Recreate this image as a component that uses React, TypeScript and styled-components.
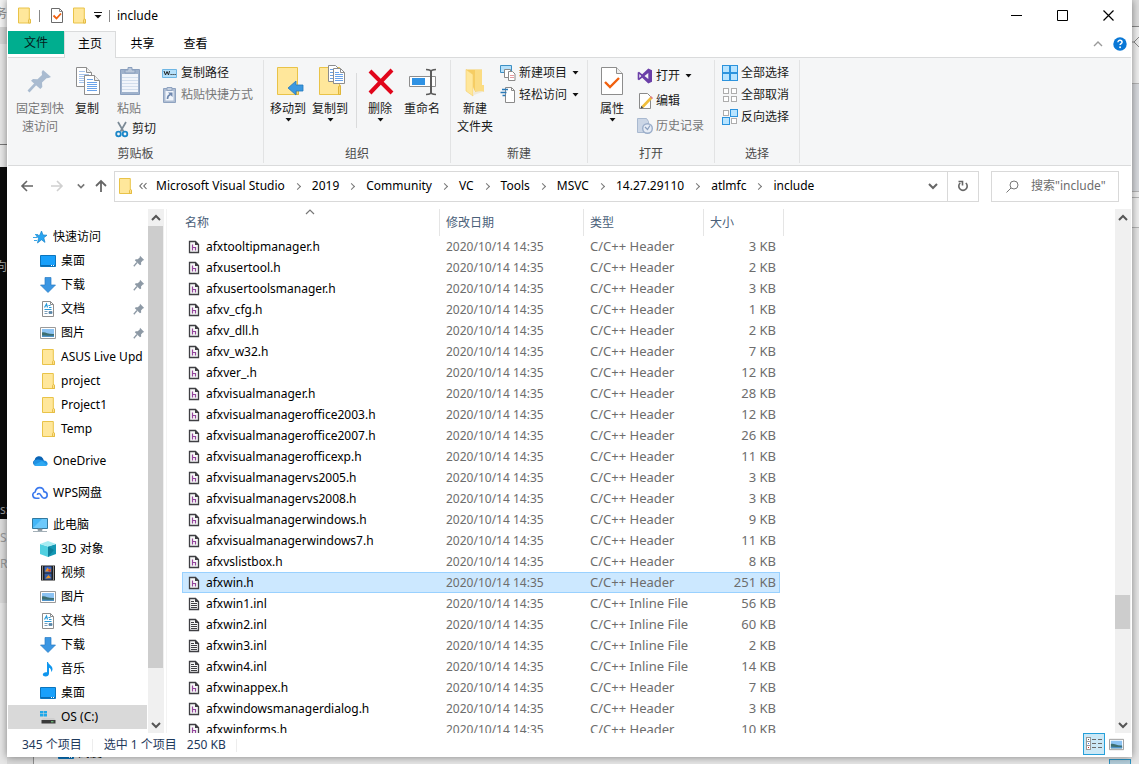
import React, { ReactNode } from "react";
import styled, { createGlobalStyle, css } from "styled-components";

const GlobalStyle = createGlobalStyle`
  *, *::before, *::after { box-sizing: border-box; }
  html, body { margin: 0; padding: 0; }
  body {
    font-family: "Noto Sans", "Noto Sans CJK SC", sans-serif;
    font-size: 12px;
    line-height: 18px;
    color: #000;
    background: #e4e4e4;
  }
  button, input {
    font: inherit;
    color: inherit;
    background: none;
    border: 0;
    padding: 0;
    margin: 0;
  }
  svg { display: block; flex: none; }
`;

/* ---------- desktop behind the window ---------- */

const Desktop = styled.div`
  position: relative;
  display: grid;
  grid-template-columns: 7px minmax(0, 1fr) 7px;
  grid-template-rows: minmax(0, 1fr) 7px;
  height: 100vh;
  overflow: hidden;
`;

const Strip = styled.div`
  grid-row: 1 / 3;
  display: flex;
  flex-direction: column;
  overflow: hidden;
`;

const Band = styled.div<{ $h?: number; $bg: string; $line?: string; $fg?: string }>`
  display: flex;
  justify-content: flex-end;
  align-items: center;
  overflow: hidden;
  white-space: nowrap;
  ${(p) => (p.$h ? `flex: 0 0 ${p.$h}px;` : "flex: 1;")}
  background: ${(p) => p.$bg};
  border-bottom: ${(p) => (p.$line ? `1px solid ${p.$line}` : "0")};
  color: ${(p) => p.$fg || "#8a8a8a"};
`;

const LeftAligned = styled(Band)`
  justify-content: flex-start;
`;

const BottomBand = styled.div`
  grid-column: 2;
  grid-row: 2;
  position: relative;
  background: #e6e6e6;
`;

const BehindItem = styled.div`
  position: absolute;
  left: 51px;
  bottom: 2px;
  display: flex;
  align-items: center;
  gap: 4px;
`;

const BehindPane = styled.div`
  position: absolute;
  left: 0;
  bottom: 0;
  width: 27px;
  height: 7px;
  background: #d9d9d9;
  border-right: 1px solid #8d8d8d;
`;

const BehindButton = styled.div`
  position: absolute;
  right: 1px;
  bottom: 0;
  width: 22px;
  height: 5px;
  background: #b3cdda;
  border: 1px solid #2d94c4;
  border-bottom: 0;
`;

/* ---------- window ---------- */

const Window = styled.div`
  grid-column: 2;
  grid-row: 1;
  position: relative;
  z-index: 1;
  display: flex;
  flex-direction: column;
  min-height: 0;
  background: #fff;
  padding: 0 1px;
  box-shadow: 0 0 8px rgba(0, 0, 0, 0.45);
`;

const TitleBar = styled.header`
  display: flex;
  align-items: center;
  height: 31px;
  padding-left: 8px;
`;

const QuickBar = styled.div`
  display: flex;
  align-items: center;
  flex: 1;
`;

const QuickButton = styled.button<{ $ml?: number }>`
  margin-left: ${(p) => p.$ml || 0}px;
`;

const Bar = styled.span`
  width: 1px;
  height: 12px;
  background: #888;
  margin: 0 7px;
`;

const WindowButton = styled.button`
  display: flex;
  align-items: center;
  justify-content: center;
  width: 46px;
  height: 31px;
`;

const Tabs = styled.nav`
  display: flex;
  height: 27px;
  border-bottom: 1px solid #dadbdc;
`;

const Tab = styled.button<{ $kind?: "file" | "active" }>`
  width: 53px;
  height: 26px;
  ${(p) =>
    p.$kind === "file" &&
    css`
      width: 56px;
      height: 23px;
      background: #00ae8f;
      color: #04201b;
    `}
  ${(p) =>
    p.$kind === "active" &&
    css`
      height: 27px;
      width: 52px;
      background: #f5f6f7;
      border: 1px solid #dadbdc;
      border-bottom: 0;
      padding-bottom: 2px;
    `}
`;

const TabTools = styled.div`
  display: flex;
  align-items: center;
  gap: 10px;
  margin-left: auto;
  padding-right: 4px;
`;

const Ribbon = styled.div`
  display: flex;
  height: 108px;
  padding: 2px 0;
  background: #f5f6f7;
  border-bottom: 1px solid #dadbdc;
`;

const Group = styled.section`
  display: flex;
  flex-direction: column;
  border-right: 1px solid #e2e3e4;
`;

const GroupBody = styled.div<{ $pl: number; $pr: number }>`
  display: flex;
  flex: 1;
  padding: 0 ${(p) => p.$pr}px 0 ${(p) => p.$pl}px;
`;

const GroupLabel = styled.h2`
  margin: 0;
  font-size: 12px;
  font-weight: 400;
  line-height: 18px;
  text-align: center;
  color: #4a4a4a;
`;

const Stack = styled.div`
  display: flex;
  flex-direction: column;
  align-items: flex-end;
`;

const BigButton = styled.button<{ $w: number }>`
  display: flex;
  flex-direction: column;
  align-items: center;
  align-self: flex-start;
  width: ${(p) => p.$w}px;
  padding-top: 5px;
  text-align: center;
  color: #1a1a1a;
  &:disabled { color: #777; }
  svg:first-child { margin-bottom: 3px; }
`;

const SmallColumn = styled.div<{ $gap?: number; $pl?: number; $pt?: number }>`
  display: flex;
  flex-direction: column;
  gap: ${(p) => p.$gap || 0}px;
  padding-left: ${(p) => p.$pl || 0}px;
  padding-top: ${(p) => p.$pt ?? 2}px;
`;

const SmallButton = styled.button`
  display: flex;
  align-items: center;
  gap: 3px;
  height: 22px;
  white-space: nowrap;
  color: #1a1a1a;
  &:disabled { color: #777; }
  svg:last-child:not(:first-child) { margin-left: 2px; }
`;

const Divider = styled.span`
  width: 1px;
  height: 55px;
  margin: 13px 5px 0;
  background: #dadbdc;
`;

/* ---------- address row ---------- */

const AddressRow = styled.div`
  display: flex;
  align-items: center;
  height: 43px;
  padding: 0 12px 3px 7px;
`;

const NavButtons = styled.div`
  display: flex;
  align-items: center;
`;

const NavButton = styled.button<{ $w: number }>`
  display: flex;
  align-items: center;
  justify-content: center;
  width: ${(p) => p.$w}px;
  height: 30px;
`;

const AddressBox = styled.div`
  display: flex;
  align-items: center;
  flex: 1;
  min-width: 0;
  height: 31px;
  border: 1px solid #d9d9d9;
  padding-left: 2px;
`;

const Crumbs = styled.ol`
  display: flex;
  flex: 1;
  align-items: center;
  min-width: 0;
  overflow: hidden;
  margin: 0;
  padding: 0 0 0 6px;
  list-style: none;
  white-space: nowrap;
  li { display: flex; align-items: center; }
  li > svg { margin-right: 9px; }
  li + li::before {
    content: "";
    width: 5px;
    height: 5px;
    margin: 1px 12px 0 10px;
    border: solid #777;
    border-width: 1px 1px 0 0;
    transform: rotate(45deg);
  }
  a { color: #000; text-decoration: none; }
`;

const RefreshButton = styled.button`
  display: flex;
  align-items: center;
  justify-content: center;
  width: 31px;
  height: 29px;
  border-left: 1px solid #d9d9d9;
`;

const SearchBox = styled.label`
  display: flex;
  align-items: center;
  gap: 12px;
  width: 128px;
  height: 31px;
  margin-left: 12px;
  padding-left: 14px;
  border: 1px solid #d9d9d9;
`;

const SearchInput = styled.input`
  flex: 1;
  min-width: 0;
  outline: 0;
  &::placeholder { color: #6d6d6d; opacity: 1; }
`;

/* ---------- body ---------- */

const Body = styled.div`
  display: flex;
  flex: 1;
  min-height: 0;
`;

const Sidebar = styled.aside`
  display: flex;
  width: 159px;
  border-right: 1px solid #f3f3f3;
  overflow: hidden;
`;

const Tree = styled.nav`
  width: 139px;
  margin-right: 1px;
  padding-top: 16px;
  overflow: hidden;
`;

const TreeItem = styled.a<{ $level: number; $gap?: boolean; $active?: boolean }>`
  display: flex;
  align-items: center;
  gap: 5px;
  height: 24px;
  margin-top: ${(p) => (p.$gap ? 8 : 0)}px;
  padding-left: ${(p) => (p.$level ? 32 : 24)}px;
  padding-right: ${(p) => (p.$level ? 2 : 0)}px;
  background: ${(p) => (p.$active ? "#d9d9d9" : "transparent")};
  color: #000;
  text-decoration: none;
  white-space: nowrap;
`;

const TreeText = styled.span`
  flex: 1 0 auto;
`;

const Track = styled.div`
  display: flex;
  flex-direction: column;
  align-items: flex-start;
  width: 16px;
  background: #f0f0f0;
`;

const TrackButton = styled.button`
  display: flex;
  align-items: center;
  justify-content: center;
  width: 16px;
  height: 17px;
`;

const Space = styled.div<{ $grow: number }>`
  flex: ${(p) => p.$grow} 1 0;
`;

const Thumb = styled.div<{ $grow?: number }>`
  width: 15px;
  ${(p) => (p.$grow ? `flex: ${p.$grow} 1 0;` : "flex: 0 0 34px;")}
  background: #cdcdcd;
`;

const Files = styled.main`
  flex: 1;
  min-width: 0;
  padding-left: 15px;
  overflow: hidden;
`;

const Table = styled.table`
  width: 602px;
  table-layout: fixed;
  border-collapse: separate;
  border-spacing: 0;
`;

const HeadCell = styled.th<{ $pad?: number }>`
  position: relative;
  height: 27px;
  padding: 0 0 0 ${(p) => p.$pad ?? 6}px;
  border-right: 1px solid #e5e5e5;
  font-weight: 400;
  text-align: left;
  color: #4a6079;
`;

const SortMark = styled.span`
  position: absolute;
  top: -2px;
  left: 50%;
  margin-left: -6px;
`;

const Cell = styled.td<{ $wide?: boolean; $right?: boolean; $main?: boolean }>`
  height: 21px;
  padding: 0 ${(p) => (p.$right ? 4 : 0)}px ${(p) => (p.$wide ? 2 : 0)}px 6px;
  font-size: ${(p) => (p.$wide ? 13 : 12)}px;
  line-height: 18px;
  text-align: ${(p) => (p.$right ? "right" : "left")};
  color: ${(p) => (p.$main ? "#000" : "#6d6d6d")};
  white-space: nowrap;
`;

const FileRow = styled.tr<{ $selected?: boolean }>`
  ${(p) =>
    p.$selected &&
    css`
      td:not(:last-child) {
        background: #cce8ff;
        box-shadow: inset 0 1px #99d1ff, inset 0 -1px #99d1ff;
      }
      td:first-child { box-shadow: inset 0 1px #99d1ff, inset 0 -1px #99d1ff, inset 1px 0 #99d1ff; }
      td:nth-child(4) { box-shadow: inset 0 1px #99d1ff, inset 0 -1px #99d1ff, inset -1px 0 #99d1ff; }
    `}
`;

const NameWrap = styled.span`
  display: flex;
  align-items: center;
  gap: 6px;
`;

const StatusBar = styled.footer`
  display: flex;
  align-items: center;
  height: 24px;
  padding: 0 7px 0 14px;
  color: #1e395b;
`;

const StatusRule = styled.span`
  width: 1px;
  height: 13px;
  margin: 0 11px 0 10px;
  background: #ededed;
`;

const StatusSize = styled.span`
  margin-left: 10px;
`;

const ViewButtons = styled.div`
  display: flex;
  align-items: center;
  align-self: flex-start;
  gap: 4px;
  margin-left: auto;
`;

const ViewButton = styled.button<{ $on?: boolean }>`
  display: flex;
  align-items: center;
  justify-content: center;
  height: 22px;
  width: ${(p) => (p.$on ? 22 : 15)}px;
  border: ${(p) => (p.$on ? "1px solid #26a0da" : "0")};
  background: ${(p) => (p.$on ? "#cbe8f6" : "transparent")};
`;

/* ---------- icons ---------- */

const Folder = ({ w = 16, h = 18 }: { w?: number; h?: number }) => (
  <svg width={w} height={h} viewBox="0 0 16 18">
    <path d="M2.5 1.5h10.8v11l1.2.6v3.4h-12z" fill="#ffe79b" stroke="#e9c348" />
    <path d="M12.5 16.5v-3l1-1.2 1 1.2v3z" fill="#ffe08a" stroke="#dfb63a" strokeWidth=".8" />
  </svg>
);

const CheckDoc = () => (
  <svg width="14" height="17" viewBox="0 0 14 17">
    <path d="M1.500 1.500h8l3 3v11h-11z" fill="#fff" stroke="#6b6b6b" />
    <path d="M9.500 1.500v3h3" fill="none" stroke="#8a8a8a" />
    <path d="M3.500 8.500l3 3L11 6.500" fill="none" stroke="#f1600e" strokeWidth="1.800" />
  </svg>
);

const Arrow = () => (
  <svg width="7" height="4" viewBox="0 0 7 4">
    <path d="M.5 0h6L3.5 3.5z" fill="#111" />
  </svg>
);

const PinBig = () => (
  <svg width="32" height="32" viewBox="0 0 32 32">
    <path
      d="M19 5l8 7-2.500 1-2 .2-4.500 4.300.3 4.500-2 2L7 15.800l2-1.800 4.500.3L18 10l-.3-3z"
      fill="#a9bbd0"
    />
    <path d="M11.500 19L4.500 26.500" stroke="#a9bbd0" strokeWidth="2.600" />
  </svg>
);

const Sheet = ({ x, y, lines = "#4b8fdd" }: { x: number; y: number; lines?: string }) => (
  <g transform={`translate(${x} ${y})`}>
    <path d="M.5.5h10l5 5v14H.5z" fill="#fff" stroke="#8d8d8d" />
    <path d="M10.500.5v5h5" fill="#eee" stroke="#8d8d8d" />
    <path d="M3 4.500h6M3 7.500h10M3 9.500h10M3 11.500h10M3 13.500h10M3 15.500h10" stroke={lines} />
  </g>
);

const CopyIcon = () => (
  <svg width="32" height="32" viewBox="0 0 32 32">
    <Sheet x={5} y={2} lines="#a5c3ec" />
    <Sheet x={13} y={10} lines="#6aa3ea" />
  </svg>
);

const PasteIcon = () => (
  <svg width="32" height="32" viewBox="0 0 32 32">
    <path d="M7.500 4.500h19v25h-19z" fill="#9fb2cc" stroke="#8a9fbe" />
    <path d="M9 9h16v18H9z" fill="#f1f5fb" />
    <path d="M9 12.500h16M9 15.500h16M9 18.500h16M9 21.500h16M9 24.500h16" stroke="#d2deed" />
    <path d="M12 8V5h3V2.500h4V5h3v3z" fill="#b9c7da" stroke="#8a9fbe" />
  </svg>
);

const CutIcon = () => (
  <svg width="14" height="17" viewBox="0 0 14 17">
    <path d="M3 1l5.500 9.500M11 1L5.500 10.500" stroke="#7b8a96" strokeWidth="1.700" />
    <circle cx="3.500" cy="13" r="2.300" fill="none" stroke="#1a86c8" strokeWidth="1.800" />
    <circle cx="10" cy="13" r="2.300" fill="none" stroke="#1a86c8" strokeWidth="1.800" />
  </svg>
);

const PathIcon = () => (
  <svg width="16" height="16" viewBox="0 0 16 16">
    <path d="M.5 4.500h14v8H.5z" fill="#b5e0fa" stroke="#6fb6e4" />
    <path d="M2 6l1.500 4L5 6.500 6.500 10l1-4" fill="none" stroke="#222" />
    <path d="M8.500 9.500h1.200M10.500 9.500h1.200M12.500 9.500h1.200" stroke="#222" />
  </svg>
);

const ShortcutIcon = () => (
  <svg width="16" height="16" viewBox="0 0 16 16">
    <path d="M1.500 1.500h12v14h-12z" fill="#aebdd3" stroke="#8fa3c0" />
    <path d="M3.500 4h8v9.500h-8z" fill="#f1f5fb" />
    <path d="M5 .5h5v3H5z" fill="#c5d0e0" stroke="#8fa3c0" />
    <path d="M5.500 12c0-3 1-4 3-4.500" stroke="#6d86ad" strokeWidth="1.600" fill="none" />
    <path d="M6 5.500h4.500V10z" fill="#6d86ad" />
  </svg>
);

const MoveIcon = () => (
  <svg width="32" height="32" viewBox="0 0 32 32">
    <path d="M5.500 2.500h20v24h1v3h-21z" fill="#ffe79b" stroke="#e9c348" />
    <path d="M24.500 29.500v-5l2-1v6z" fill="#fbd873" stroke="#dfb63a" />
    <path d="M16 23l8-7v4h7v6h-7v4z" fill="#3b98e0" stroke="#2478bd" strokeWidth=".8" />
  </svg>
);

const CopyToIcon = () => (
  <svg width="32" height="32" viewBox="0 0 32 32">
    <path d="M5.500 2.500h20v24h1v3h-21z" fill="#ffe79b" stroke="#e9c348" />
    <path d="M24.500 29.500v-8l2-1v9z" fill="#fbd873" stroke="#dfb63a" />
    <path d="M14.500.500h7l4 4v12h-11z" fill="#fff" stroke="#8d8d8d" />
    <path d="M16 4.500h4M16 7.500h3M16 10.500h3M16 13.500h3" stroke="#6aa0e2" />
    <path d="M19.500 3.500h7l4 4v11h-11z" fill="#fff" stroke="#8d8d8d" />
    <path d="M26.500 3.500v4h4" fill="none" stroke="#8d8d8d" />
    <path d="M21 7.500h4M21 9.500h8M21 11.500h8M21 13.500h8M21 15.500h8" stroke="#6aa3ea" />
  </svg>
);

const DeleteIcon = () => (
  <svg width="32" height="32" viewBox="0 0 32 32">
    <path d="M6 6l22 22M28 5L6 28" stroke="#e1061b" strokeWidth="4" />
  </svg>
);

const RenameIcon = () => (
  <svg width="32" height="32" viewBox="0 0 32 32">
    <path d="M3.500 11.500h26v10h-26z" fill="#fff" stroke="#8d8d8d" />
    <path d="M6 13h13v7H6z" fill="#2f92e4" />
    <path d="M25 5v24" stroke="#5c5c5c" strokeWidth="2" />
    <path d="M20 4.500c3 0 5 .5 5 2.500 0-2 2-2.500 5-2.500M20 29.500c3 0 5-.5 5-2.500 0 2 2 2.500 5 2.500" fill="none" stroke="#5c5c5c" strokeWidth="1.600" />
  </svg>
);

const NewFolderIcon = () => (
  <svg width="32" height="32" viewBox="0 0 32 32">
    <path d="M7 4.500h16v21.500l-7 1z" fill="#f6cd63" />
    <path d="M16 5h7v15h2v7l-9-1z" fill="#fbdc83" />
    <path d="M7 4.500l7 5V31l-7-5z" fill="#ffe79b" stroke="#f3cf6b" strokeWidth=".6" />
    <path d="M14 27l12-1-11 4z" fill="#efe9da" />
  </svg>
);

const NewItemIcon = () => (
  <svg width="16" height="16" viewBox="0 0 16 16">
    <path d="M.5.500h11v7H.5z" fill="#b5e0fa" stroke="#3c8fc4" />
    <path d="M4.500 4.500h6v8h-6z" fill="#fff" stroke="#8a8a8a" />
    <path d="M8.500 6.500h4l2.500 2.500v6.500H8.500z" fill="#fff" stroke="#8a8a8a" />
    <path d="M10 10.500h4M10 12.500h4" stroke="#e59aa0" />
  </svg>
);

const EasyIcon = () => (
  <svg width="16" height="16" viewBox="0 0 16 16">
    <path d="M5.500.500h6l3 3v12h-9z" fill="#fff" stroke="#8a8a8a" />
    <path d="M11.500.500v3h3" fill="none" stroke="#8a8a8a" />
    <path d="M2 2.500h6M.5 5.500h6M2.500 8.500h3" stroke="#2a7ab8" strokeWidth="1.400" />
  </svg>
);

const VsIcon = () => (
  <svg width="16" height="16" viewBox="0 0 16 16">
    <path d="M11.300.5l3.700 1.700v11.600l-3.700 1.700L5.200 9.700 2 12.300.7 11.500v-7L2 3.700l3.200 2.600zM11.300 5L7.500 8l3.800 3zM2.300 6v4l2-2z" fill="#6b3fa8" fillRule="evenodd" />
  </svg>
);

const EditIcon = () => (
  <svg width="16" height="16" viewBox="0 0 16 16">
    <path d="M2.500.500h8l3 3v12h-11z" fill="#fff" stroke="#8a8a8a" />
    <path d="M14.500 4.500l-9 9.500" stroke="#f0bd3a" strokeWidth="2.600" />
    <path d="M3.500 15.500l.8-2.800 2 2z" fill="#444" />
    <path d="M13.500 3.500l2 2" stroke="#e0798a" strokeWidth="1.500" />
  </svg>
);

const HistoryIcon = () => (
  <svg width="16" height="16" viewBox="0 0 16 16">
    <path d="M.5 .5h9l2 3v11H.5z" fill="#cbd6e6" stroke="#a9b9d0" />
    <circle cx="10.500" cy="10.500" r="4.800" fill="#e6ecf5" stroke="#9aadc9" strokeWidth="1.400" />
    <path d="M8 9l2.500 2.500L13 7.500" fill="none" stroke="#8a9fbe" strokeWidth="1.200" />
  </svg>
);

const Squares = ({ on }: { on: boolean[] }) => (
  <svg width="16" height="16" viewBox="0 0 16 16">
    {on.map((blue, i) => {
      const x = (i % 2) * 8;
      const y = Math.floor(i / 2) * 8;
      return blue ? (
        <rect key={i} x={x + 0.5} y={y + 0.5} width="7" height="7" fill="#b8e4ff" stroke="#2c93dd" />
      ) : (
        <rect key={i} x={x + 1.5} y={y + 1.5} width="5" height="5" fill="#fff" stroke="#adadad" />
      );
    })}
  </svg>
);

const Chevron = ({ dir, w = 10, color = "#555", sw = 2 }: { dir: "up" | "down"; w?: number; color?: string; sw?: number }) => (
  <svg width={w} height={w} viewBox="0 0 10 10">
    <path d={dir === "up" ? "M1 7l4-4 4 4" : "M1 3l4 4 4-4"} fill="none" stroke={color} strokeWidth={sw} />
  </svg>
);

const BackArrow = ({ color }: { color: string }) => (
  <svg width="14" height="12" viewBox="0 0 14 12">
    <path d="M7 1L2 6l5 5M2 6h11" fill="none" stroke={color} strokeWidth="1.600" />
  </svg>
);

const ForwardArrow = ({ color }: { color: string }) => (
  <svg width="14" height="12" viewBox="0 0 14 12">
    <path d="M7 1l5 5-5 5M12 6H1" fill="none" stroke={color} strokeWidth="1.600" />
  </svg>
);

const UpArrow = () => (
  <svg width="12" height="14" viewBox="0 0 12 14">
    <path d="M1 7l5-5 5 5M6 2v11" fill="none" stroke="#666" strokeWidth="1.800" />
  </svg>
);

const RefreshIcon = () => (
  <svg width="12" height="12" viewBox="0 0 12 12">
    <path d="M3.200 3a4.200 4.200 0 1 0 5.600 0" fill="none" stroke="#666" strokeWidth="1.600" />
    <path d="M1.500 1.500h4v4" fill="none" stroke="#666" strokeWidth="1.600" />
  </svg>
);

const SearchIcon = () => (
  <svg width="13" height="13" viewBox="0 0 13 13">
    <circle cx="8" cy="5" r="4" fill="none" stroke="#777" />
    <path d="M5 8L.5 12.500" stroke="#777" />
  </svg>
);

const HelpIcon = () => (
  <svg width="14" height="14" viewBox="0 0 15 15">
    <circle cx="7.500" cy="7.500" r="7.200" fill="#0a78d6" />
    <path d="M5.300 5.600c0-2.800 4.400-2.600 4.400-.1 0 1.600-2.100 1.600-2.100 3.200" fill="none" stroke="#fff" strokeWidth="1.600" />
    <circle cx="7.600" cy="11" r="1" fill="#fff" />
  </svg>
);

const StarIcon = () => (
  <svg width="16" height="16" viewBox="0 0 16 16">
    <path d="M9.500 2l1.500 4 4 .2-3.200 2.600 1.200 4.600-3.500-2.600L5.500 14l1-4.700L4 6.500l3.800-.3z" fill="#29a5f2" stroke="#1583c9" strokeWidth=".7" />
    <path d="M3 5.500h3M1 8.500h4M2 11.500h3" stroke="#3aa6e8" />
  </svg>
);

const DesktopIcon = () => (
  <svg width="16" height="16" viewBox="0 0 16 16">
    <path d="M.5 2.500h15v11H.5z" fill="#18a0fb" stroke="#0b75bd" />
    <path d="M1 12.500h14" stroke="#0a6cb4" />
    <path d="M11 12.500h1M13 12.500h1" stroke="#fff" />
  </svg>
);

const DownloadIcon = () => (
  <svg width="16" height="16" viewBox="0 0 16 16">
    <path d="M5 .5h6V8h4.500L8 15.500.5 8H5z" fill="#3b96e2" stroke="#2a7cc4" strokeWidth=".7" />
  </svg>
);

const DocIcon = () => (
  <svg width="16" height="16" viewBox="0 0 16 16">
    <path d="M2.500.500h8l3 3v12h-11z" fill="#fff" stroke="#8d8d8d" />
    <path d="M10.500.500v3h3" fill="none" stroke="#8d8d8d" />
    <path d="M4.500 6.500L6.500 3l1 3.500M8.500 4.500h2M9 6.500h2.500M4.500 8.500h7" fill="none" stroke="#2a9ad8" strokeWidth="1.200" />
    <path d="M4.500 10.500h3M4.500 12.500h3M9 10.500h3v2H9z" stroke="#5a86a8" fill="#5a86a8" strokeWidth=".8" />
  </svg>
);

const PictureIcon = ({ w = 16, h = 16 }: { w?: number; h?: number }) => (
  <svg width={w} height={h} viewBox="0 0 16 16">
    <path d="M.5 2.500h15v11H.5z" fill="#fff" stroke="#9a9a9a" />
    <path d="M2 4h12v8H2z" fill="#8cc3f3" />
    <path d="M2 7.500c3-1 6 2 12 1.500v3H2z" fill="#3d6f72" />
    <path d="M2 10.500c4-.5 8 .8 12 0V12H2z" fill="#4f93c9" />
  </svg>
);

const CloudIcon = () => (
  <svg width="16" height="16" viewBox="0 0 16 16">
    <path d="M3 12.500a3 3 0 0 1-.3-5.500A4.500 4.500 0 0 1 11 5.500L12 8z" fill="#0a64b5" />
    <path d="M4 13a3.200 3.200 0 0 1 .5-6.300c4-.5 5 1 7 .8 5 .2 5.500 5.500 1.500 5.500z" fill="#1f92e4" />
    <path d="M2 12l8-4 5 4-1.500 1H4z" fill="#2fa9f2" />
  </svg>
);

const WpsIcon = () => (
  <svg width="16" height="16" viewBox="0 0 16 16">
    <path d="M7.500 13.200H4a3.200 3.200 0 0 1-.8-6.300C3.800 4 5.600 2.600 7.700 2.600c2.300 0 4 1.700 4.200 4 1.900.3 3.300 1.700 3.300 3.400 0 1.800-1.300 3.200-3.200 3.200-3.200 0-2.500-4.700-5-4.700-1 0-1.600.6-1.600 1.600" fill="none" stroke="#3b79ee" strokeWidth="1.600" />
  </svg>
);

const PcIcon = () => (
  <svg width="16" height="16" viewBox="0 0 16 16">
    <path d="M.5 1.500h15v10H.5z" fill="#43b6f7" stroke="#32799f" />
    <path d="M1 11l9-9h5v9z" fill="#6cc9fb" />
    <path d="M6 12h4v1.500H6zM1 14.500h14" fill="#888" stroke="#8c9ba5" strokeWidth=".8" />
  </svg>
);

const CubeIcon = () => (
  <svg width="16" height="16" viewBox="0 0 16 16">
    <path d="M0 3l8 2.500V16l-8-3z" fill="#4fd0e0" />
    <path d="M16 3L8 5.500V16l8-3z" fill="#1497b3" />
    <path d="M0 3l8-3 8 3-8 2.500z" fill="#a6ecf2" />
    <path d="M8 5.500L14 9l-6 7z" fill="#0c7f9b" />
  </svg>
);

const VideoIcon = () => (
  <svg width="16" height="16" viewBox="0 0 16 16">
    <path d="M1 .500h14v15H1z" fill="#1f1f1f" />
    <path d="M4.500 1.500h7v6h-7z" fill="#3b68c5" />
    <path d="M4.500 8.500h7v6h-7z" fill="#355da6" />
    <path d="M5 6.500l2.500-4 1.500 2 1.500-1 .5 3zM5.500 13.500l3-3.500 2.500 3z" fill="#e8962c" />
    <circle cx="9.500" cy="5.500" r="1.200" fill="#c8382c" />
    <path d="M2.500 1.500v13M13.500 1.500v13" stroke="#fff" strokeDasharray="1 1" />
  </svg>
);

const MusicIcon = () => (
  <svg width="16" height="16" viewBox="0 0 16 16">
    <path d="M8 1c.5 3 4.500 3.500 4.500 7 0 1.500-.7 2.300-1.300 3 .3-2.600-.8-3.600-2.200-4.300v5.800c0 2-1.500 3-3.300 3-1.700 0-2.900-.8-2.900-2 0-1.600 2.200-2.800 4.200-2.200V1z" fill="#0f96ee" />
  </svg>
);

const DriveIcon = () => (
  <svg width="16" height="16" viewBox="0 0 16 16">
    <path d="M0 2h3v2.500H0zM3.500 2H7v2.500H3.500zM0 5h3v2.500H0zM3.500 5H7v2.500H3.500z" fill="#1fa7e8" />
    <path d="M3 9h11l1.500 2H1.500z" fill="#cfcfcf" />
    <path d="M1.500 11h14v3.500h-14z" fill="#3a3a3a" />
    <path d="M11 12.800h2.500" stroke="#7fe08a" />
  </svg>
);

const PinSmall = () => (
  <svg width="12" height="12" viewBox="0 0 12 12">
    <path d="M7 .8L11.200 5l-1.400.5-1.800 2 .2 2L7 10.300 1.800 5.200l.9-1 2 .1 2-1.900z" fill="#8d99a5" />
    <path d="M4 7.500L.8 11.200" stroke="#8d99a5" strokeWidth="1.300" />
  </svg>
);

const HeaderFile = () => (
  <svg width="12" height="14" viewBox="0 0 12 14">
    <path d="M1.500 1.500h6l3 3v8h-9z" fill="#f7f7f7" stroke="#3f3f43" strokeWidth="1.300" />
    <path d="M7 1l4 4H7z" fill="#3f3f43" />
    <path d="M4.500 4.500v6M4.500 7.500h3v3" fill="none" stroke="#93459c" strokeWidth="1.200" />
  </svg>
);

const TextFile = () => (
  <svg width="12" height="14" viewBox="0 0 12 14">
    <path d="M1.500 1.500h6l3 3v8h-9z" fill="#f7f7f7" stroke="#3f3f43" strokeWidth="1.300" />
    <path d="M7 1l4 4H7z" fill="#3f3f43" />
    <path d="M3 4.500h3M3 6.500h6M3 8.500h6M3 10.500h6" stroke="#3f3f43" />
  </svg>
);

const DetailsIcon = () => (
  <svg width="16" height="14" viewBox="0 0 16 14">
    {[0, 1, 2].map((i) => (
      <g key={i} transform={`translate(0 ${i * 4})`}>
        <rect x=".5" y=".5" width="4" height="4" fill="#fff" stroke="#999" />
        <path d="M2 2.500h1" stroke={["#555", "#3b79ee", "#d22"][i]} />
        <path d="M6 2.500h4M12 2.500h4" stroke="#6b6b6b" />
      </g>
    ))}
  </svg>
);

/* ---------- data ---------- */

type Item = { text: string; icon: ReactNode; level: number; gap?: boolean; pin?: boolean; active?: boolean };

const tree: Item[] = [
  { text: "快速访问", icon: <StarIcon />, level: 0 },
  { text: "桌面", icon: <DesktopIcon />, level: 1, pin: true },
  { text: "下载", icon: <DownloadIcon />, level: 1, pin: true },
  { text: "文档", icon: <DocIcon />, level: 1, pin: true },
  { text: "图片", icon: <PictureIcon />, level: 1, pin: true },
  { text: "ASUS Live Upd", icon: <Folder />, level: 1 },
  { text: "project", icon: <Folder />, level: 1 },
  { text: "Project1", icon: <Folder />, level: 1 },
  { text: "Temp", icon: <Folder />, level: 1 },
  { text: "OneDrive", icon: <CloudIcon />, level: 0, gap: true },
  { text: "WPS网盘", icon: <WpsIcon />, level: 0, gap: true },
  { text: "此电脑", icon: <PcIcon />, level: 0, gap: true },
  { text: "3D 对象", icon: <CubeIcon />, level: 1 },
  { text: "视频", icon: <VideoIcon />, level: 1 },
  { text: "图片", icon: <PictureIcon />, level: 1 },
  { text: "文档", icon: <DocIcon />, level: 1 },
  { text: "下载", icon: <DownloadIcon />, level: 1 },
  { text: "音乐", icon: <MusicIcon />, level: 1 },
  { text: "桌面", icon: <DesktopIcon />, level: 1 },
  { text: "OS (C:)", icon: <DriveIcon />, level: 1, active: true },
];

const files: [string, number][] = [
  ["afxtooltipmanager.h", 3],
  ["afxusertool.h", 2],
  ["afxusertoolsmanager.h", 3],
  ["afxv_cfg.h", 1],
  ["afxv_dll.h", 2],
  ["afxv_w32.h", 7],
  ["afxver_.h", 12],
  ["afxvisualmanager.h", 28],
  ["afxvisualmanageroffice2003.h", 12],
  ["afxvisualmanageroffice2007.h", 26],
  ["afxvisualmanagerofficexp.h", 11],
  ["afxvisualmanagervs2005.h", 3],
  ["afxvisualmanagervs2008.h", 3],
  ["afxvisualmanagerwindows.h", 9],
  ["afxvisualmanagerwindows7.h", 11],
  ["afxvslistbox.h", 8],
  ["afxwin.h", 251],
  ["afxwin1.inl", 56],
  ["afxwin2.inl", 60],
  ["afxwin3.inl", 2],
  ["afxwin4.inl", 14],
  ["afxwinappex.h", 7],
  ["afxwindowsmanagerdialog.h", 3],
  ["afxwinforms.h", 10],
];

const crumbs = ["Microsoft Visual Studio", "2019", "Community", "VC", "Tools", "MSVC", "14.27.29110", "atlmfc", "include"];

/* ---------- page ---------- */

export default function App() {
  return (
    <>
      <GlobalStyle />
      <Desktop>
        <Strip>
          <Band $h={27} $bg="#f4f4f4">务</Band>
          <Band $h={17} $bg="#d5d5d5" />
          <Band $h={101} $bg="#e6e6e6" $line="#777" />
          <Band $h={22} $bg="#e9e9e9" />
          <Band $h={199} $bg="#0b0b0b" $fg="#aaa">向</Band>
          <Band $h={135} $bg="#0b0b0b" />
          <LeftAligned $h={18} $bg="#0b0b0b" $fg="#999">s:</LeftAligned>
          <LeftAligned $h={38} $bg="#dedede" $fg="#9a9a9a">S</LeftAligned>
          <LeftAligned $h={13} $bg="#dedede" $fg="#9a9a9a">R</LeftAligned>
          <Band $h={33} $bg="#d9d9d9" />
          <Band $bg="#e6e6e6" />
        </Strip>

        <Window>
          <TitleBar>
            <QuickBar>
              <Folder w={16} h={19} />
              <Bar />
              <QuickButton $ml={3} aria-label="属性">
                <CheckDoc />
              </QuickButton>
              <QuickButton $ml={7} aria-label="新建文件夹">
                <Folder w={16} h={19} />
              </QuickButton>
              <QuickButton $ml={7} aria-label="自定义快速访问工具栏">
                <svg width="8" height="7" viewBox="0 0 8 7">
                  <path d="M0 .5h8" stroke="#111" />
                  <path d="M.5 3h7L4 6.500z" fill="#111" />
                </svg>
              </QuickButton>
              <Bar />
              <span>include</span>
            </QuickBar>
            <WindowButton aria-label="最小化">
              <svg width="11" height="11" viewBox="0 0 11 11"><path d="M0 5.500h11" stroke="#000" /></svg>
            </WindowButton>
            <WindowButton aria-label="最大化">
              <svg width="11" height="11" viewBox="0 0 11 11"><path d="M.5.500h10v10H.5z" fill="none" stroke="#000" /></svg>
            </WindowButton>
            <WindowButton aria-label="关闭">
              <svg width="11" height="11" viewBox="0 0 11 11"><path d="M.5.500l10 10M10.500.5l-10 10" stroke="#000" strokeWidth="1.200" /></svg>
            </WindowButton>
          </TitleBar>

          <Tabs>
            <Tab $kind="file">文件</Tab>
            <Tab $kind="active">主页</Tab>
            <Tab>共享</Tab>
            <Tab>查看</Tab>
            <TabTools>
              <Chevron dir="up" color="#9a9a9a" sw={1.4} />
              <HelpIcon />
            </TabTools>
          </Tabs>

          <Ribbon>
            <Group>
              <GroupBody $pl={0} $pr={10}>
                <BigButton $w={64} disabled>
                  <PinBig />
                  固定到快
                  <br />
                  速访问
                </BigButton>
                <BigButton $w={30}>
                  <CopyIcon />
                  复制
                </BigButton>
                <Stack>
                  <BigButton $w={54} disabled>
                    <PasteIcon />
                    粘贴
                  </BigButton>
                  <SmallButton>
                    <CutIcon />
                    剪切
                  </SmallButton>
                </Stack>
                <SmallColumn $pl={6}>
                  <SmallButton><PathIcon />复制路径</SmallButton>
                  <SmallButton disabled><ShortcutIcon />粘贴快捷方式</SmallButton>
                </SmallColumn>
              </GroupBody>
              <GroupLabel>剪贴板</GroupLabel>
            </Group>

            <Group>
              <GroupBody $pl={3} $pr={4}>
                <BigButton $w={42}><MoveIcon />移动到<Arrow /></BigButton>
                <BigButton $w={42}><CopyToIcon />复制到<Arrow /></BigButton>
                <Divider />
                <BigButton $w={36}><DeleteIcon />删除<Arrow /></BigButton>
                <BigButton $w={48}><RenameIcon />重命名</BigButton>
              </GroupBody>
              <GroupLabel>组织</GroupLabel>
            </Group>

            <Group>
              <GroupBody $pl={0} $pr={8}>
                <BigButton $w={48}>
                  <NewFolderIcon />
                  新建
                  <br />
                  文件夹
                </BigButton>
                <SmallColumn $pl={1}>
                  <SmallButton><NewItemIcon />新建项目<Arrow /></SmallButton>
                  <SmallButton><EasyIcon />轻松访问<Arrow /></SmallButton>
                </SmallColumn>
              </GroupBody>
              <GroupLabel>新建</GroupLabel>
            </Group>

            <Group>
              <GroupBody $pl={0} $pr={10}>
                <BigButton $w={48}>
                  <svg width="32" height="32" viewBox="0 0 32 32">
                    <path d="M5.500 2.500h15l6 6v21h-21z" fill="#fff" stroke="#8d8d8d" />
                    <path d="M20.500 2.500v6h6" fill="#eee" stroke="#8d8d8d" />
                    <path d="M9 17l5 5 9-9" fill="none" stroke="#f1600e" strokeWidth="2.400" />
                  </svg>
                  属性
                  <Arrow />
                </BigButton>
                <SmallColumn $pl={1} $gap={3} $pt={5}>
                  <SmallButton><VsIcon />打开<Arrow /></SmallButton>
                  <SmallButton><EditIcon />编辑</SmallButton>
                  <SmallButton disabled><HistoryIcon />历史记录</SmallButton>
                </SmallColumn>
              </GroupBody>
              <GroupLabel>打开</GroupLabel>
            </Group>

            <Group>
              <GroupBody $pl={7} $pr={10}>
                <SmallColumn>
                  <SmallButton><Squares on={[true, true, true, true]} />全部选择</SmallButton>
                  <SmallButton><Squares on={[false, false, false, false]} />全部取消</SmallButton>
                  <SmallButton><Squares on={[false, true, true, false]} />反向选择</SmallButton>
                </SmallColumn>
              </GroupBody>
              <GroupLabel>选择</GroupLabel>
            </Group>
          </Ribbon>

          <AddressRow>
            <NavButtons>
              <NavButton $w={24} aria-label="后退"><BackArrow color="#666" /></NavButton>
              <NavButton $w={36} aria-label="前进"><ForwardArrow color="#d0d0d0" /></NavButton>
              <NavButton $w={12} aria-label="最近浏览的位置"><Chevron dir="down" w={8} color="#777" /></NavButton>
              <NavButton $w={27} aria-label="向上"><UpArrow /></NavButton>
            </NavButtons>
            <AddressBox>
              <Folder />
              <Crumbs>
                <li>
                  <svg width="8" height="8" viewBox="0 0 8 8">
                    <path d="M3.500 1L.8 4l2.700 3M7.500 1L4.800 4l2.700 3" fill="none" stroke="#666" strokeWidth="1.100" />
                  </svg>
                  <a href="#path">{crumbs[0]}</a>
                </li>
                {crumbs.slice(1).map((c) => (
                  <li key={c}><a href={`#${c}`}>{c}</a></li>
                ))}
              </Crumbs>
              <NavButton $w={28} aria-label="以前的位置"><Chevron dir="down" color="#666" /></NavButton>
              <RefreshButton aria-label="刷新"><RefreshIcon /></RefreshButton>
            </AddressBox>
            <SearchBox>
              <SearchIcon />
              <SearchInput type="text" aria-label="搜索" placeholder={'搜索"include"'} />
            </SearchBox>
          </AddressRow>

          <Body>
            <Sidebar>
              <Tree>
                {tree.map((t, i) => (
                  <TreeItem key={i} href={`#item-${i}`} $level={t.level} $gap={t.gap} $active={t.active}>
                    {t.icon}
                    <TreeText>{t.text}</TreeText>
                    {t.pin && <PinSmall />}
                  </TreeItem>
                ))}
              </Tree>
              <Track>
                <TrackButton aria-label="向上滚动"><Chevron dir="up" /></TrackButton>
                <Thumb $grow={442} />
                <Space $grow={48} />
                <TrackButton aria-label="向下滚动"><Chevron dir="down" /></TrackButton>
              </Track>
            </Sidebar>

            <Files>
              <Table>
                <colgroup>
                  <col width="258" />
                  <col width="144" />
                  <col width="120" />
                  <col width="76" />
                  <col width="4" />
                </colgroup>
                <thead>
                  <tr>
                    <HeadCell $pad={3}>
                      名称
                      <SortMark><Chevron dir="up" color="#777" sw={1.2} /></SortMark>
                    </HeadCell>
                    <HeadCell>修改日期</HeadCell>
                    <HeadCell>类型</HeadCell>
                    <HeadCell colSpan={2}>大小</HeadCell>
                  </tr>
                </thead>
                <tbody>
                  {files.map(([name, size]) => {
                    const inline = name.endsWith(".inl");
                    return (
                      <FileRow key={name} $selected={name === "afxwin.h"}>
                        <Cell $main>
                          <NameWrap>
                            {inline ? <TextFile /> : <HeaderFile />}
                            {name}
                          </NameWrap>
                        </Cell>
                        <Cell>2020/10/14 14:35</Cell>
                        <Cell $wide>{inline ? "C/C++ Inline File" : "C/C++ Header"}</Cell>
                        <Cell $wide $right>{size} KB</Cell>
                        <td />
                      </FileRow>
                    );
                  })}
                </tbody>
              </Table>
            </Files>

            <Track>
              <TrackButton aria-label="向上滚动"><Chevron dir="up" /></TrackButton>
              <Space $grow={369} />
              <Thumb />
              <Space $grow={87} />
              <TrackButton aria-label="向下滚动"><Chevron dir="down" /></TrackButton>
            </Track>
          </Body>

          <StatusBar>
            <span>345 个项目</span>
            <StatusRule />
            <span>选中 1 个项目</span>
            <StatusSize>250 KB</StatusSize>
            <StatusRule />
            <ViewButtons>
              <ViewButton $on aria-label="详细信息"><DetailsIcon /></ViewButton>
              <ViewButton aria-label="大图标"><PictureIcon w={15} h={15} /></ViewButton>
            </ViewButtons>
          </StatusBar>
        </Window>

        <Strip>
          <Band $h={27} $bg="#dedede" $line="#888" />
          <LeftAligned $h={29} $bg="#efefef">
            <svg width="7" height="10" viewBox="0 0 7 10"><path d="M0 5h2L7 0M2 5l5 5" fill="none" stroke="#888" /></svg>
          </LeftAligned>
          <Band $h={28} $bg="#efefef" $line="#b5b5b5" />
          <Band $h={108} $bg="#d8dade" $line="#b5b5b5" />
          <Band $h={6} $bg="#efefef" $line="#b5b5b5" />
          <Band $h={30} $bg="#efefef" $line="#b5b5b5" />
          <Band $bg="#e6e6e6" />
        </Strip>

        <BottomBand>
          <BehindPane />
          <BehindItem>
            <DesktopIcon />
            高度
          </BehindItem>
          <BehindButton />
        </BottomBand>
      </Desktop>
    </>
  );
}
